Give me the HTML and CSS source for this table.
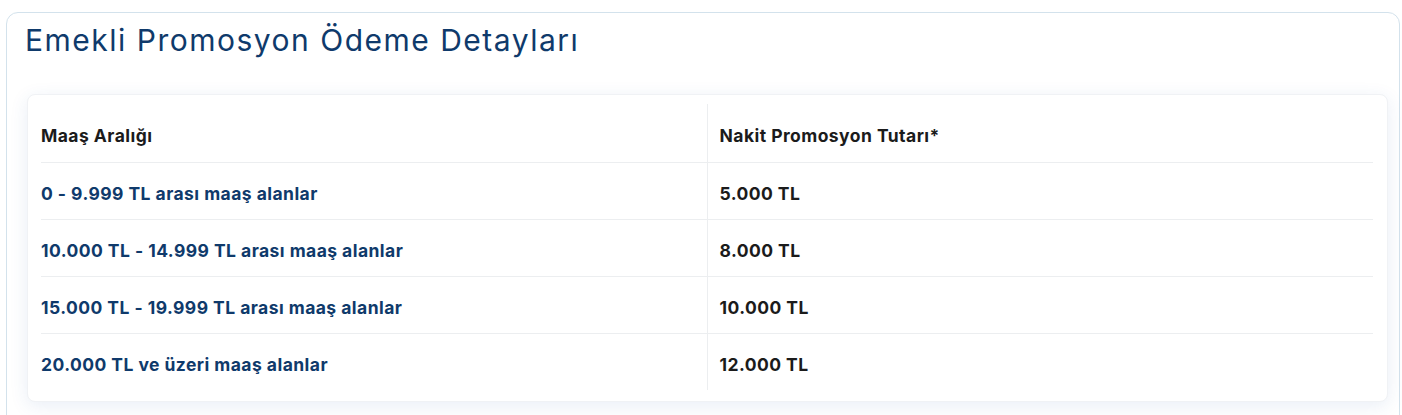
FILE: index.html
```html
<!DOCTYPE html>
<html lang="tr">
<head>
<meta charset="utf-8">
<link rel="stylesheet" href="styles.css">
</head>
<body>
<section class="panel">
  <h2 class="title">Emekli Promosyon Ödeme Detayları</h2>
  <div class="card">
    <table class="promo">
      <thead>
        <tr><th>Maaş Aralığı</th><th>Nakit Promosyon Tutarı*</th></tr>
      </thead>
      <tbody>
        <tr><td class="range">0 - 9.999 TL arası maaş alanlar</td><td>5.000 TL</td></tr>
        <tr><td class="range">10.000 TL - 14.999 TL arası maaş alanlar</td><td>8.000 TL</td></tr>
        <tr><td class="range">15.000 TL - 19.999 TL arası maaş alanlar</td><td>10.000 TL</td></tr>
        <tr><td class="range">20.000 TL ve üzeri maaş alanlar</td><td>12.000 TL</td></tr>
      </tbody>
    </table>
  </div>
</section>
</body>
</html>
```
FILE: styles.css
```css
html, body { margin: 0; padding: 0; background: #fff; }
body { padding: 12px 2px 0 6px; font-family: Inter, "Noto Sans", sans-serif; }
.panel {
  border: 1px solid #d3e2ec;
  border-radius: 12px;
  padding: 7px 11px 20px 18px;
  min-height: 420px;
  box-sizing: border-box;
}
.title {
  margin: 0;
  font-weight: 400;
  font-size: 30px;
  line-height: 40px;
  letter-spacing: 1.5px;
  color: #0f3a6b;
}
.card {
  margin: 34px 0 0 2px;
  background: #fff;
  border-radius: 8px;
  padding: 9px 14px 11px 13px;
  box-shadow: 0 4px 18px rgba(40, 90, 170, 0.10);
  border: 1px solid #f0f2f5;
}
.promo { width: 100%; border-collapse: collapse; table-layout: fixed; }
.promo th, .promo td {
  box-sizing: border-box;
  text-align: left;
  font-size: 17.5px;
  font-weight: 700;
  letter-spacing: 0.45px;
  height: 57px;
  padding: 5px 0 0 12px;
  color: #1b1b1b;
  border-bottom: 1px solid #eceef0;
}
.promo th { height: 58px; padding-top: 6px; }
.promo th:first-child, .promo td:first-child { padding-left: 0; border-right: 1px solid #eceef0; }
.promo tbody tr:last-child td { border-bottom: none; }
.promo td.range { color: #0f3a6b; }
```
